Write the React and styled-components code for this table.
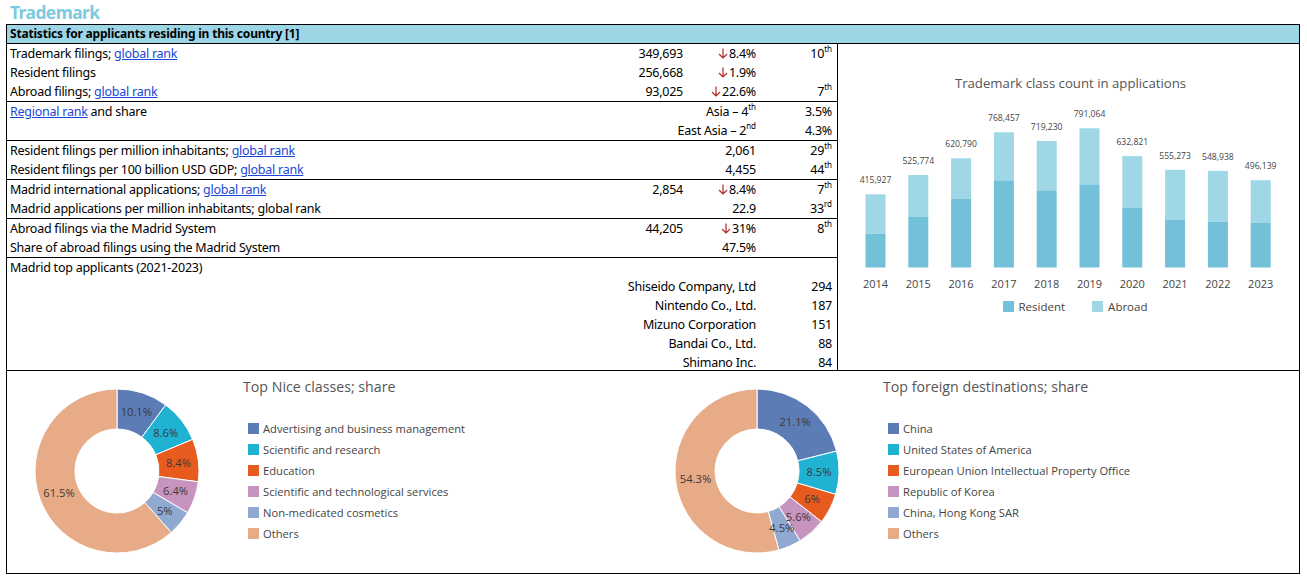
import styled, { createGlobalStyle } from "styled-components";

const linkColor = "#1a47d6";
const downColor = "#b3262b";
const chartText = "#444";
const resident = "#72c1d9";
const abroad = "#9fd7e6";

const GlobalStyle = createGlobalStyle`
  body {
    margin: 0;
    background: #fff;
    font-family: "Noto Sans", "Open Sans", sans-serif;
    color: #000;
  }
`;

const Page = styled.div`
  padding: 0 6px;
`;

const PageTitle = styled.h1`
  margin: 0;
  font-size: 17.5px;
  line-height: 24px;
  font-weight: 700;
  letter-spacing: -0.6px;
  color: #7ccbe0;
  padding-left: 4px;
`;

const Frame = styled.div`
  width: 1294px;
  border: 1px solid #000;
  box-sizing: border-box;
`;

const HeaderRow = styled.div`
  background: #9cd6e6;
  border-bottom: 1px solid #000;
  height: 18px;
  line-height: 18px;
  font-size: 12px;
  letter-spacing: -0.2px;
  font-weight: 700;
  padding-left: 3px;
`;

const TopSection = styled.div`
  display: grid;
  grid-template-columns: 831px 1fr;
  border-bottom: 1px solid #000;
`;

const StatsColumn = styled.div`
  border-right: 1px solid #000;
`;

const Group = styled.div`
  border-bottom: ${(p) => (p.$last ? "none" : "1px solid #000")};
  height: ${(p) => (p.$last ? "112px" : "auto")};
`;

const Row = styled.div`
  display: grid;
  grid-template-columns: 1fr 80px 73px 76px;
  height: 19px;
  line-height: 19px;
  font-size: 12.5px;
  letter-spacing: -0.25px;
  padding: 0 5px 0 3px;
`;

const Label = styled.span`
  white-space: nowrap;
`;

const Cell = styled.span`
  text-align: right;
  white-space: nowrap;
  grid-column: ${(p) => p.$span || "auto"};
`;

const Link = styled.a`
  color: ${linkColor};
  text-decoration: underline;
`;

const ArrowSvg = styled.svg`
  display: inline-block;
  vertical-align: -1px;
  margin-right: 1px;
`;

const Sup = styled.sup`
  font-size: 8px;
  line-height: 0;
  vertical-align: 6px;
  letter-spacing: 0;
`;

const ChartPanel = styled.div`
  display: flex;
  flex-direction: column;
  align-items: center;
  padding-top: 30px;
`;

const ChartTitle = styled.div`
  font-family: "Open Sans", sans-serif;
  font-size: 13.2px;
  line-height: 18px;
  color: #555;
  margin-left: 4px;
`;

const BarSvg = styled.svg`
  display: block;
  margin-top: 8px;
`;

const BarLegend = styled.div`
  display: flex;
  gap: 27px;
  margin-top: 2px;
  margin-left: 13px;
`;

const LegendItem = styled.div`
  display: flex;
  align-items: center;
  gap: ${(p) => p.$gap || 5}px;
  font-family: "Open Sans", sans-serif;
  font-size: ${(p) => p.$size || 11.5}px;
  color: ${chartText};
  height: ${(p) => p.$h || 16}px;
  white-space: nowrap;
`;

const Swatch = styled.span`
  width: 11px;
  height: 11px;
  background: ${(p) => p.$color};
  flex: none;
`;

const BottomSection = styled.div`
  display: grid;
  grid-template-columns: 640px 1fr;
  height: 202px;
`;

const DonutBlock = styled.div`
  display: flex;
`;

const DonutSvg = styled.svg`
  display: block;
  flex: none;
`;

const DonutInfo = styled.div`
  padding: 6px 0 0 16px;
`;

const DonutTitle = styled.div`
  font-family: "Open Sans", sans-serif;
  font-size: 14.2px;
  line-height: 20px;
  color: #555;
`;

const DonutLegend = styled.div`
  margin: 21px 0 0 5px;
  display: flex;
  flex-direction: column;
`;

const bars = [
  { year: 2014, total: 415927, res: 191800 },
  { year: 2015, total: 525774, res: 290000 },
  { year: 2016, total: 620790, res: 392000 },
  { year: 2017, total: 768457, res: 495000 },
  { year: 2018, total: 719230, res: 438000 },
  { year: 2019, total: 791064, res: 472000 },
  { year: 2020, total: 632821, res: 341000 },
  { year: 2021, total: 555273, res: 271000 },
  { year: 2022, total: 548938, res: 260000 },
  { year: 2023, total: 496139, res: 254000 },
];

const palette = ["#5b7cb5", "#1fb2d3", "#e85b1f", "#c794bf", "#8fa9d1", "#e8ab87"];

const niceClasses = [
  { name: "Advertising and business management", v: 10.1 },
  { name: "Scientific and research", v: 8.6 },
  { name: "Education", v: 8.4 },
  { name: "Scientific and technological services", v: 6.4 },
  { name: "Non-medicated cosmetics", v: 5 },
  { name: "Others", v: 61.5 },
];

const destinations = [
  { name: "China", v: 21.1 },
  { name: "United States of America", v: 8.5 },
  { name: "European Union Intellectual Property Office", v: 6 },
  { name: "Republic of Korea", v: 5.6 },
  { name: "China, Hong Kong SAR", v: 4.5 },
  { name: "Others", v: 54.3 },
];

const fmt = (n) => n.toLocaleString("en-US");

const Down = () => (
  <ArrowSvg width="10" height="11" viewBox="0 0 10 11">
    <path d="M5 0.5 V10 M1 6 L5 10 L9 6" fill="none" stroke={downColor} strokeWidth="1.2" />
  </ArrowSvg>
);

const BarChart = () => {
  const base = 167.5;
  const scale = 139.2 / 791064;
  return (
    <BarSvg width="461" height="196" viewBox="0 0 461 196">
      {bars.map((b, i) => {
        const cx = 37.5 + i * 42.8;
        const hTot = b.total * scale;
        const hRes = b.res * scale;
        return (
          <g key={b.year}>
            <rect x={cx - 10} y={base - hTot} width="20" height={hTot - hRes} fill={abroad} />
            <rect x={cx - 10} y={base - hRes} width="20" height={hRes} fill={resident} />
            <text
              x={cx}
              y={base - hTot - 11}
              textAnchor="middle"
              fontSize="8.6"
              fontFamily="Open Sans, sans-serif"
              fill={chartText}
            >
              {fmt(b.total)}
            </text>
            <text
              x={cx}
              y={base + 20}
              textAnchor="middle"
              fontSize="11"
              fontFamily="Open Sans, sans-serif"
              fill={chartText}
            >
              {b.year}
            </text>
          </g>
        );
      })}
    </BarSvg>
  );
};

const Donut = ({ data }) => {
  const cx = 110;
  const cy = 100;
  const R = 82;
  const r = 42;
  const pt = (rad, frac) => {
    const a = frac * 2 * Math.PI;
    return [cx + rad * Math.sin(a), cy - rad * Math.cos(a)];
  };
  let acc = 0;
  const slices = data.map((d) => {
    const start = acc / 100;
    acc += d.v;
    return { ...d, start, end: acc / 100 };
  });
  return (
    <DonutSvg width="220" height="202" viewBox="0 0 220 202">
      {slices.map((s, i) => {
        const large = s.end - s.start > 0.5 ? 1 : 0;
        const [x1, y1] = pt(R, s.start);
        const [x2, y2] = pt(R, s.end);
        const [x3, y3] = pt(r, s.end);
        const [x4, y4] = pt(r, s.start);
        const path = `M${x1},${y1} A${R},${R} 0 ${large} 1 ${x2},${y2} L${x3},${y3} A${r},${r} 0 ${large} 0 ${x4},${y4} Z`;
        return <path key={s.name} d={path} fill={palette[i]} stroke="#fff" strokeWidth="1" />;
      })}
      {slices.map((s) => {
        const [lx, ly] = pt(62, (s.start + s.end) / 2);
        return (
          <text
            key={s.name}
            x={lx}
            y={ly + 4}
            textAnchor="middle"
            fontSize="11.2"
            fontFamily="Open Sans, sans-serif"
            fill="#3a3a3a"
          >
            {s.v}%
          </text>
        );
      })}
    </DonutSvg>
  );
};

const DonutPanel = ({ title, data }) => (
  <DonutBlock>
    <Donut data={data} />
    <DonutInfo>
      <DonutTitle>{title}</DonutTitle>
      <DonutLegend>
        {data.map((d, i) => (
          <LegendItem key={d.name} $h={21} $gap={4} $size={11.2}>
            <Swatch $color={palette[i]} />
            {d.name}
          </LegendItem>
        ))}
      </DonutLegend>
    </DonutInfo>
  </DonutBlock>
);

const applicants = [
  ["Shiseido Company, Ltd", 294],
  ["Nintendo Co., Ltd.", 187],
  ["Mizuno Corporation", 151],
  ["Bandai Co., Ltd.", 88],
  ["Shimano Inc.", 84],
];

const App = () => (
  <Page>
    <GlobalStyle />
    <PageTitle>Trademark</PageTitle>
    <Frame>
      <HeaderRow>Statistics for applicants residing in this country [1]</HeaderRow>
      <TopSection>
        <StatsColumn>
          <Group>
            <Row>
              <Label>
                Trademark filings; <Link href="#">global rank</Link>
              </Label>
              <Cell>349,693</Cell>
              <Cell><Down />8.4%</Cell>
              <Cell>10<Sup>th</Sup></Cell>
            </Row>
            <Row>
              <Label>Resident filings</Label>
              <Cell>256,668</Cell>
              <Cell><Down />1.9%</Cell>
              <Cell />
            </Row>
            <Row>
              <Label>
                Abroad filings; <Link href="#">global rank</Link>
              </Label>
              <Cell>93,025</Cell>
              <Cell><Down />22.6%</Cell>
              <Cell>7<Sup>th</Sup></Cell>
            </Row>
          </Group>
          <Group>
            <Row>
              <Label>
                <Link href="#">Regional rank</Link> and share
              </Label>
              <Cell $span="2 / 4">Asia – 4<Sup>th</Sup></Cell>
              <Cell>3.5%</Cell>
            </Row>
            <Row>
              <Label />
              <Cell $span="2 / 4">East Asia – 2<Sup>nd</Sup></Cell>
              <Cell>4.3%</Cell>
            </Row>
          </Group>
          <Group>
            <Row>
              <Label>
                Resident filings per million inhabitants; <Link href="#">global rank</Link>
              </Label>
              <Cell $span="2 / 4">2,061</Cell>
              <Cell>29<Sup>th</Sup></Cell>
            </Row>
            <Row>
              <Label>
                Resident filings per 100 billion USD GDP; <Link href="#">global rank</Link>
              </Label>
              <Cell $span="2 / 4">4,455</Cell>
              <Cell>44<Sup>th</Sup></Cell>
            </Row>
          </Group>
          <Group>
            <Row>
              <Label>
                Madrid international applications; <Link href="#">global rank</Link>
              </Label>
              <Cell>2,854</Cell>
              <Cell><Down />8.4%</Cell>
              <Cell>7<Sup>th</Sup></Cell>
            </Row>
            <Row>
              <Label>Madrid applications per million inhabitants; global rank</Label>
              <Cell $span="2 / 4">22.9</Cell>
              <Cell>33<Sup>rd</Sup></Cell>
            </Row>
          </Group>
          <Group>
            <Row>
              <Label>Abroad filings via the Madrid System</Label>
              <Cell>44,205</Cell>
              <Cell><Down />31%</Cell>
              <Cell>8<Sup>th</Sup></Cell>
            </Row>
            <Row>
              <Label>Share of abroad filings using the Madrid System</Label>
              <Cell $span="2 / 4">47.5%</Cell>
              <Cell />
            </Row>
          </Group>
          <Group $last>
            <Row>
              <Label>Madrid top applicants (2021-2023)</Label>
            </Row>
            {applicants.map(([name, n]) => (
              <Row key={name}>
                <Label />
                <Cell $span="1 / 4">{name}</Cell>
                <Cell>{n}</Cell>
              </Row>
            ))}
          </Group>
        </StatsColumn>
        <ChartPanel>
          <ChartTitle>Trademark class count in applications</ChartTitle>
          <BarChart />
          <BarLegend>
            <LegendItem>
              <Swatch $color={resident} />
              Resident
            </LegendItem>
            <LegendItem>
              <Swatch $color={abroad} />
              Abroad
            </LegendItem>
          </BarLegend>
        </ChartPanel>
      </TopSection>
      <BottomSection>
        <DonutPanel title="Top Nice classes; share" data={niceClasses} />
        <DonutPanel title="Top foreign destinations; share" data={destinations} />
      </BottomSection>
    </Frame>
  </Page>
);

export default App;
